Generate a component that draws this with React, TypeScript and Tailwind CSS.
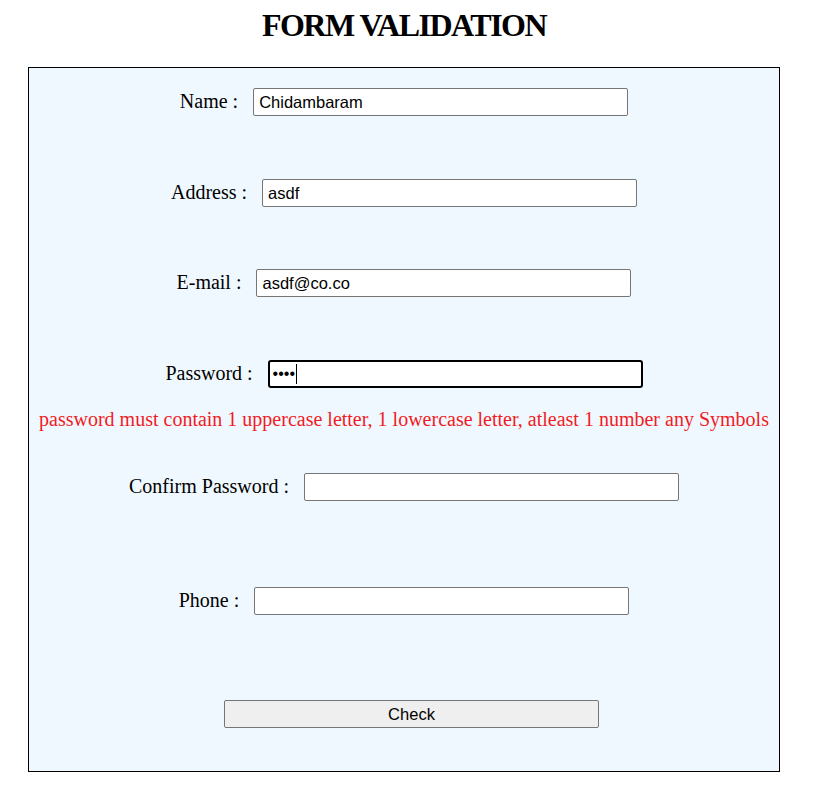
import React from "react";

const labelCls = "text-[20px] leading-none text-black whitespace-pre pb-[3px]";
const inputCls =
  "w-[375px] h-[28px] box-border border border-[#767676] rounded-[2px] bg-white px-[5px] text-[16.5px] text-black outline-none";

function Row({ label, value, type = "text" }: { label: string; value: string; type?: string }) {
  return (
    <div className="flex items-center justify-center gap-[15px] h-[28px]">
      <span className={labelCls}>{label}</span>
      <input
        type={type}
        readOnly
        value={value}
        className={inputCls}
        style={{ fontFamily: '"Liberation Sans", Arial, sans-serif' }}
      />
    </div>
  );
}

export default function App() {
  return (
    <div className="w-[815px] h-[801px] bg-white" style={{ fontFamily: '"Liberation Serif", "Times New Roman", serif' }}>
      <div className="w-[752px] ml-[28px]">
        <h1 className="pt-[7px] text-center text-[32px] leading-[36px] font-bold tracking-[-1.5px] text-black">
          FORM VALIDATION
        </h1>
        <div className="mt-[24px] border border-black bg-[#f0f8ff] pt-[20px] pb-[43px] h-[705px] box-border">
          <Row label="Name :" value="Chidambaram" />
          <div className="mt-[63px]">
            <Row label="Address :" value="asdf" />
          </div>
          <div className="mt-[62px]">
            <Row label="E-mail :" value="asdf@co.co" />
          </div>
          <div className="mt-[63px] flex items-center justify-center gap-[15px] h-[28px]">
            <span className={labelCls}>Password :</span>
            <div className="relative">
              <input
                type="password"
                readOnly
                value="asdf"
                className="w-[375px] h-[28px] box-border border-2 border-black rounded-[3px] bg-white px-[3px] text-[16px] text-black outline-none"
                style={{ fontFamily: '"Liberation Sans", Arial, sans-serif' }}
              />
              <div className="absolute left-[28px] top-[4px] w-[1px] h-[20px] bg-black" />
            </div>
          </div>
          <div className="mt-[17px] h-[28px] flex items-center justify-center text-[20px] text-[#f01c24] whitespace-nowrap">
            password must contain 1 uppercase letter, 1 lowercase letter, atleast 1 number any Symbols
          </div>
          <div className="mt-[40px]">
            <Row label="Confirm Password :" value="" />
          </div>
          <div className="mt-[86px]">
            <Row label="Phone :" value="" />
          </div>
          <div className="mt-[85px] flex justify-center">
            <button
              className="ml-[15px] w-[375px] h-[28px] box-border border border-[#767676] rounded-[2px] bg-[#efefef] text-[16.5px] text-black"
              style={{ fontFamily: '"Liberation Sans", Arial, sans-serif' }}
            >
              Check
            </button>
          </div>
        </div>
      </div>
    </div>
  );
}
